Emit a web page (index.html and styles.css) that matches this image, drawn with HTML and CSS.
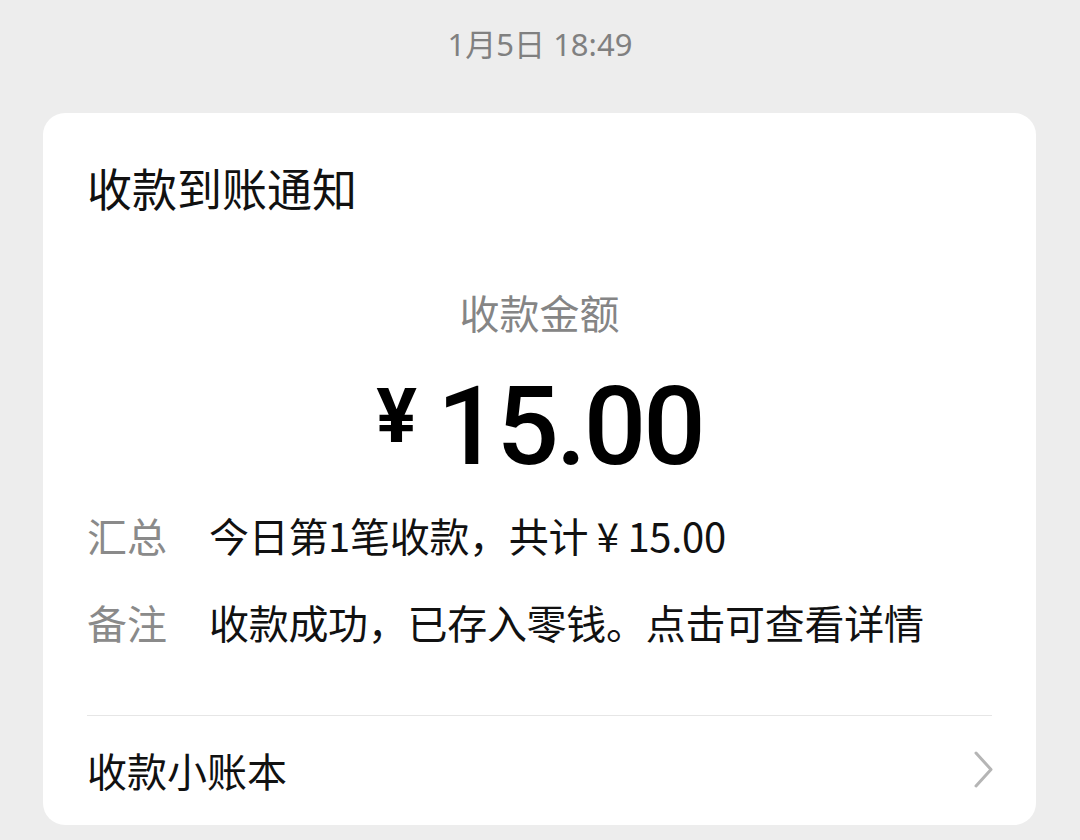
FILE: index.html
```html
<!DOCTYPE html>
<html lang="zh-CN">
<head>
<meta charset="utf-8">
<title>收款到账通知</title>
<link rel="stylesheet" href="styles.css">
</head>
<body>
<div class="time">1月5日 18:49</div>
<div class="card">
  <div class="title">收款到账通知</div>
  <div class="sub">收款金额</div>
  <div class="amount"><span class="yen">¥</span><span class="num">15.00</span></div>
  <div class="row"><span class="label">汇总</span><span class="val">今日第1笔收款，共计 ¥ 15.00</span></div>
  <div class="row row2"><span class="label">备注</span><span class="val">收款成功，已存入零钱。点击可查看详情</span></div>
  <div class="divider"></div>
  <div class="foot">
    <span class="foot-text">收款小账本</span>
    <svg class="chev" width="22" height="40" viewBox="0 0 22 40"><path d="M3 3 L18 19.5 L3 36" fill="none" stroke="#b5b5b5" stroke-width="3" stroke-linecap="round" stroke-linejoin="round"/></svg>
  </div>
</div>
</body>
</html>
```
FILE: styles.css
```css
* { box-sizing: border-box; }
html, body { margin: 0; padding: 0; }
body {
  background: #ededed;
  width: 1080px;
  height: 840px;
  overflow: hidden;
  font-family: "Noto Sans CJK SC", "Noto Sans", sans-serif;
  color: #111;
}
.time {
  text-align: center;
  font-size: 31px;
  line-height: 40px;
  padding-top: 24px;
  height: 113px;
  color: #808080;
  font-family: "Noto Sans", "Noto Sans CJK SC", sans-serif;
}
.card {
  margin: 0 44px 0 43px;
  background: #fff;
  border-radius: 22px;
  padding: 45px 44px 0 44px;
  height: 712px;
}
.title {
  font-size: 45px;
  line-height: 60px;
  color: #111;
}
.sub {
  margin-top: 66px;
  text-align: center;
  font-size: 40px;
  line-height: 56px;
  color: #858585;
}
.amount {
  margin-top: 27px;
  height: 120px;
  display: flex;
  justify-content: center;
  align-items: center;
  color: #000;
  font-family: "Roboto", sans-serif;
}
.yen {
  font-size: 76px;
  font-weight: 700;
  margin-right: 20px;
  margin-top: -22px;
}
.num {
  font-size: 110px;
  font-weight: 500;
  letter-spacing: -3px;
  line-height: 120px;
}
.row {
  margin-top: 20px;
  display: flex;
  font-size: 40px;
  line-height: 56px;
}
.row2 { margin-top: 31px; }
.label {
  width: 122px;
  flex: none;
  color: #8a8a8a;
}
.val { color: #111; letter-spacing: -0.3px; }
.divider {
  margin-top: 65px;
  height: 1px;
  background: #e6e6e6;
}
.foot {
  height: 108px;
  display: flex;
  align-items: center;
  justify-content: space-between;
}
.foot-text {
  font-size: 40px;
  line-height: 56px;
}
.chev { margin-right: -3px; }
```
